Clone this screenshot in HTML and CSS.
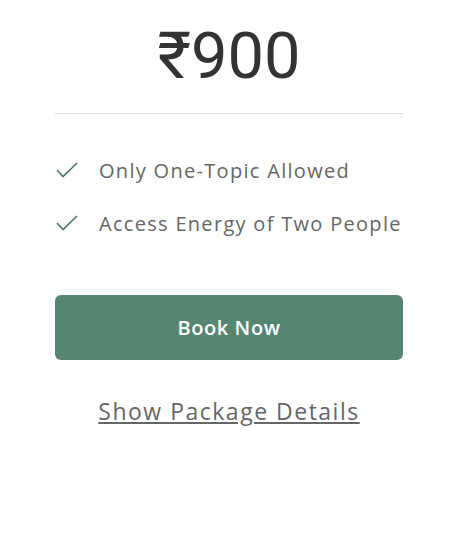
FILE: index.html
```html
<!DOCTYPE html>
<html lang="en">
<head>
  <meta charset="UTF-8">
  <meta name="viewport" content="width=device-width, initial-scale=1.0">
  <title>Package</title>
  <link rel="stylesheet" href="styles.css">
</head>
<body>
  <main class="package-card">
    <div class="price">₹900</div>
    <hr class="divider">
    <ul class="features">
      <li>
        <svg class="check" viewBox="0 0 22 16" width="22" height="16"><path d="M1 8l6 6.5L21 1" fill="none" stroke="#4f7a62" stroke-width="1.7"/></svg>
        <span>Only One-Topic Allowed</span>
      </li>
      <li>
        <svg class="check" viewBox="0 0 22 16" width="22" height="16"><path d="M1 8l6 6.5L21 1" fill="none" stroke="#4f7a62" stroke-width="1.7"/></svg>
        <span>Access Energy of Two People</span>
      </li>
    </ul>
    <button class="book-button">Book Now</button>
    <a class="details-link" href="#">Show Package Details</a>
  </main>
</body>
</html>
```

FILE: styles.css
```css
body {
  margin: 0;
  padding: 0;
  background-color: #fff;
  font-family: "Open Sans", sans-serif;
}

.package-card {
  width: 348px;
  margin-left: 55px;
  padding-top: 18px;
  display: flex;
  flex-direction: column;
}

.price {
  font-family: Roboto, "Noto Sans", sans-serif;
  font-size: 65px;
  color: #333;
  text-align: center;
  line-height: 76px;
}

.divider {
  border: none;
  border-top: 1px solid #ddd;
  margin: 19px 0 0;
}

.features {
  list-style: none;
  margin: 0;
  padding: 0;
  margin-top: 42px;
}

.features li {
  display: flex;
  align-items: center;
  height: 28px;
  margin-bottom: 25px;
  color: #666;
  font-size: 20px;
  letter-spacing: 1.3px;
}

.check {
  margin-left: 1px;
  margin-right: 21px;
}

.book-button {
  margin-top: 33px;
  height: 65px;
  border: none;
  border-radius: 6px;
  background-color: #568672;
  color: #fff;
  font-family: "Open Sans", sans-serif;
  font-size: 20px;
  font-weight: 600;
  letter-spacing: 0.6px;
}

.details-link {
  margin-top: 35px;
  text-align: center;
  color: #666;
  font-size: 23px;
  letter-spacing: 1.5px;
}
```
